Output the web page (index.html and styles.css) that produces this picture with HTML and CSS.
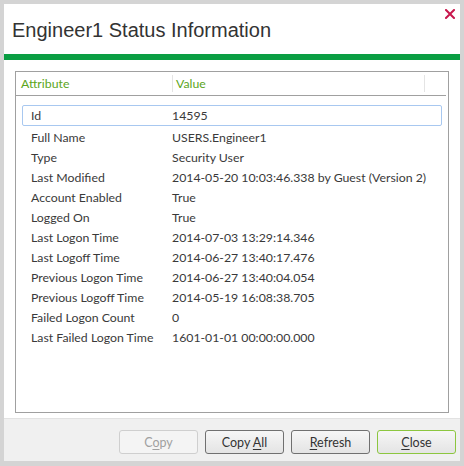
FILE: index.html
```html
<!DOCTYPE html>
<html>
<head>
<meta charset="utf-8">
<link rel="stylesheet" href="styles.css">
</head>
<body>
<div class="dialog">
  <div class="titlebar">
    <h1 class="title">Engineer1 Status Information</h1>
    <span class="close" aria-label="Close">
      <svg width="10" height="10" viewBox="0 0 10 10"><path d="M1 1L9 9M9 1L1 9" stroke="#c8174d" stroke-width="2" stroke-linecap="square"/></svg>
    </span>
  </div>
  <div class="accent"></div>
  <div class="content">
    <div class="list">
      <div class="header">
        <div class="hcell hattr">Attribute</div>
        <div class="hcell hval">Value</div>
        <div class="hcell hrest"></div>
      </div>
      <div class="rows">
        <div class="row selected"><span class="k">Id</span><span class="v">14595</span></div>
        <div class="row"><span class="k">Full Name</span><span class="v">USERS.Engineer1</span></div>
        <div class="row"><span class="k">Type</span><span class="v">Security User</span></div>
        <div class="row"><span class="k">Last Modified</span><span class="v">2014-05-20 10:03:46.338 by Guest (Version 2)</span></div>
        <div class="row"><span class="k">Account Enabled</span><span class="v">True</span></div>
        <div class="row"><span class="k">Logged On</span><span class="v">True</span></div>
        <div class="row"><span class="k">Last Logon Time</span><span class="v">2014-07-03 13:29:14.346</span></div>
        <div class="row"><span class="k">Last Logoff Time</span><span class="v">2014-06-27 13:40:17.476</span></div>
        <div class="row"><span class="k">Previous Logon Time</span><span class="v">2014-06-27 13:40:04.054</span></div>
        <div class="row"><span class="k">Previous Logoff Time</span><span class="v">2014-05-19 16:08:38.705</span></div>
        <div class="row"><span class="k">Failed Logon Count</span><span class="v">0</span></div>
        <div class="row"><span class="k">Last Failed Logon Time</span><span class="v">1601-01-01 00:00:00.000</span></div>
      </div>
    </div>
  </div>
  <div class="footer">
    <button class="btn" disabled>C<u>o</u>py</button>
    <button class="btn">Copy <u>A</u>ll</button>
    <button class="btn"><u>R</u>efresh</button>
    <button class="btn primary"><u>C</u>lose</button>
  </div>
</div>
</body>
</html>
```

FILE: styles.css
```css
html, body {
  margin: 0;
  padding: 0;
  background: #d4d4d4;
  width: 464px;
  height: 466px;
  overflow: hidden;
}
.dialog {
  margin: 4px 4px 0 4px;
  width: 456px;
  height: 457px;
  background: #ffffff;
  display: flex;
  flex-direction: column;
  font-family: Lato, "Open Sans", sans-serif;
  font-size: 12.3px;
  color: #3a3a3a;
}
.titlebar {
  position: relative;
  height: 50px;
  display: flex;
  align-items: center;
}
.title {
  margin: 0 0 0 8px;
  font-family: "Liberation Sans", Arial, sans-serif;
  font-weight: normal;
  font-size: 20px;
  color: #333333;
  padding-top: 2px;
}
.close {
  position: absolute;
  right: 5px;
  top: 5px;
  width: 10px;
  height: 10px;
  display: flex;
}
.accent {
  height: 6px;
  background: #0a9e43;
}
.content {
  flex: 1;
  padding: 11px 11px 0 11px;
  display: flex;
  flex-direction: column;
}
.list {
  flex: 1;
  border: 1px solid #a0a0a0;
  display: flex;
  flex-direction: column;
}
.header {
  display: flex;
  height: 23px;
  border-bottom: 1px solid #a0a0a0;
  margin-right: 2px;
  align-items: center;
}
.hcell {
  color: #5ba51a;
  box-sizing: border-box;
}
.hattr {
  width: 157px;
  padding-left: 5px;
  border-right: 1px solid #e4e4e4;
  height: 17px;
  line-height: 17px;
}
.hval {
  width: 252px;
  padding-left: 3px;
  border-right: 1px solid #e4e4e4;
  height: 17px;
  line-height: 17px;
}
.rows {
  padding: 9px 6px 0 6px;
  display: flex;
  flex-direction: column;
}
.row {
  display: flex;
  height: 20px;
  line-height: 20px;
  border: 1px solid transparent;
  border-radius: 2px;
  box-sizing: border-box;
}
.row.selected {
  border-color: #a8c8f0;
  height: 21px;
  margin-bottom: 1px;
}
.k {
  width: 149px;
  padding-left: 8px;
  box-sizing: border-box;
}
.v {
  flex: 1;
  white-space: nowrap;
}
.footer {
  height: 43px;
  margin-top: 5px;
  border-top: 1px solid #e2e2e2;
  background: #f0f0f0;
  display: flex;
  justify-content: flex-end;
  align-items: flex-start;
  gap: 7px;
  padding: 11px 4px 0 0;
  box-sizing: border-box;
}
.btn {
  width: 79px;
  height: 24px;
  border: 1px solid #707070;
  border-radius: 3px;
  background: linear-gradient(#f6f6f6, #e4e4e4);
  font-family: Lato, "Open Sans", sans-serif;
  font-size: 12.5px;
  color: #333333;
  padding: 0;
}
.btn u {
  text-underline-offset: 2px;
}
.btn:disabled {
  border-color: #cfcfcf;
  background: #f4f4f4;
  color: #a0a0a0;
}
.btn.primary {
  border-color: #8cc63f;
}
```
